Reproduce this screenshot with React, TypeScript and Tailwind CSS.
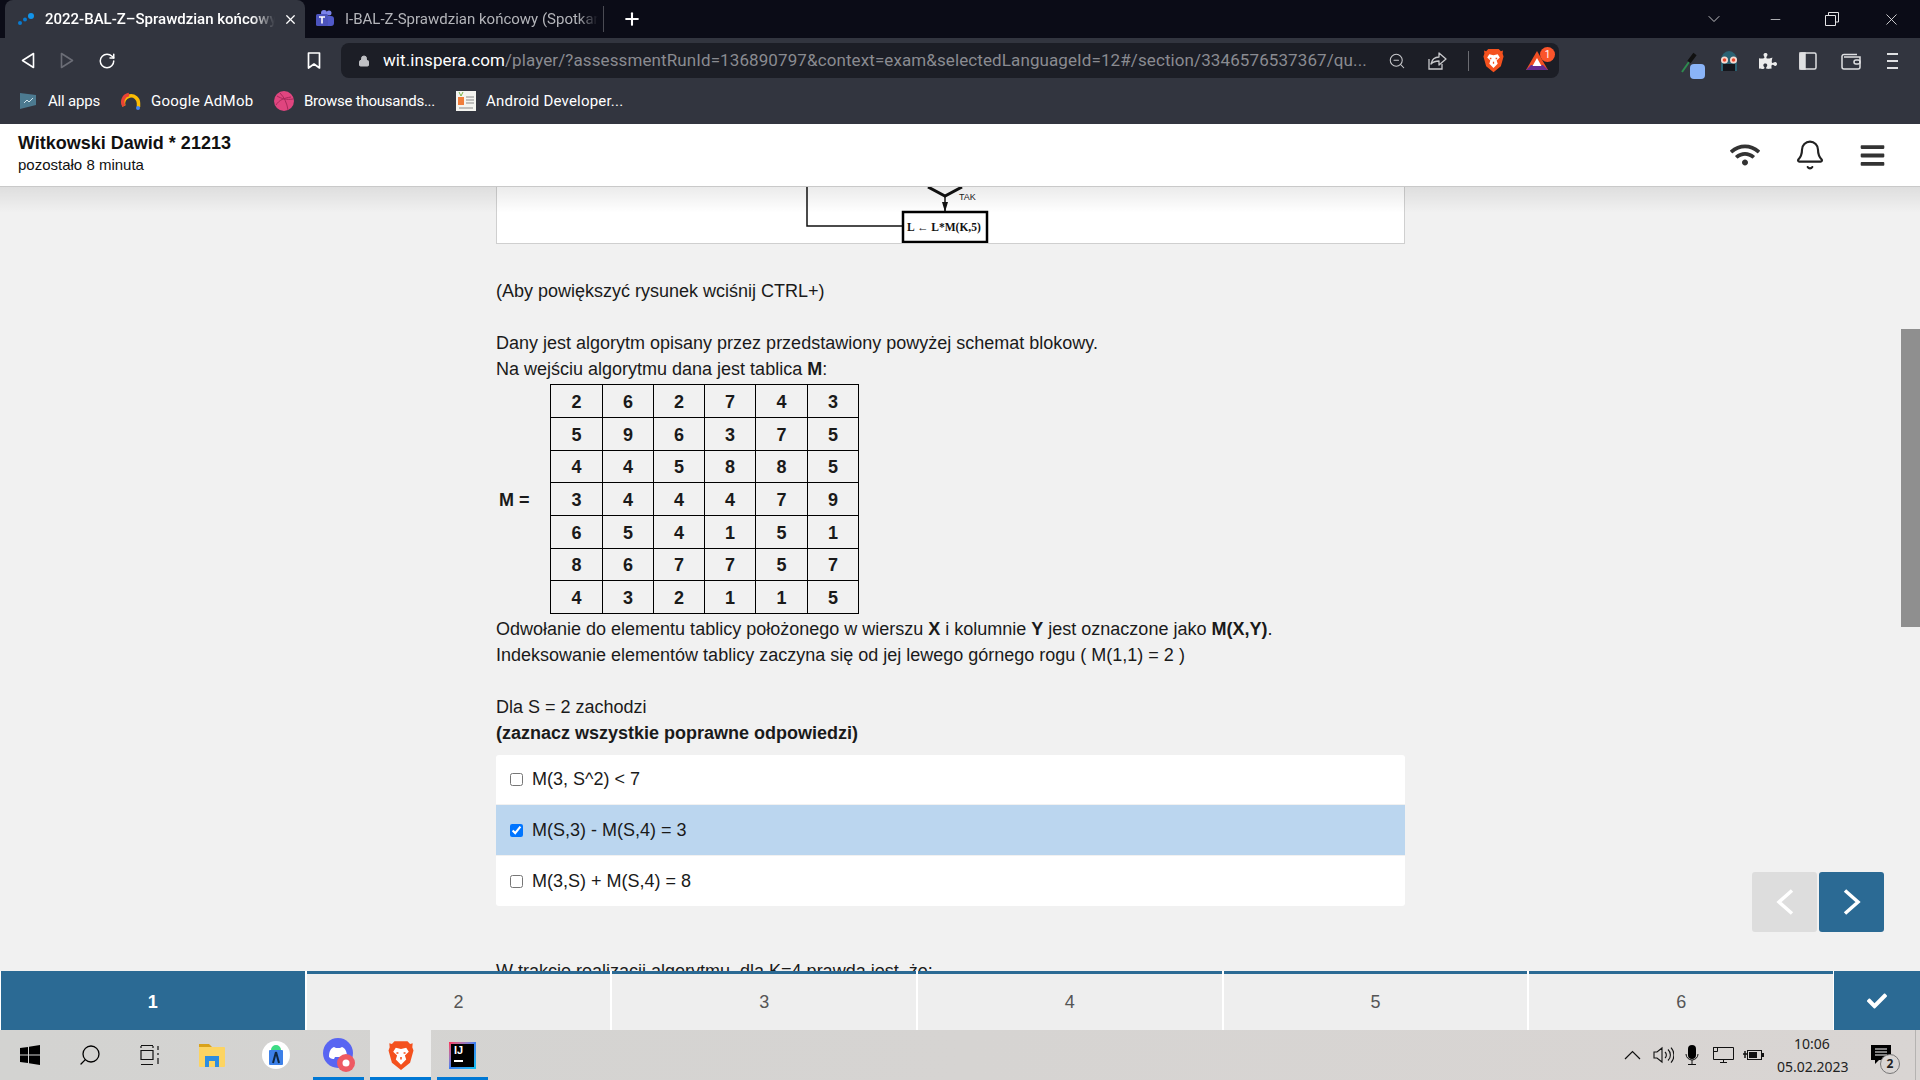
import { FaWifi, FaBars, FaCheck, FaPuzzlePiece } from "react-icons/fa";
import { Bell, ChevronDown, Lock, Minus, Plus, RotateCw, Search, X, ZoomOut } from "lucide-react";

const matrix = [
  { height: "h-[33px]", cells: [2, 6, 2, 7, 4, 3] },
  { height: "h-[33px]", cells: [5, 9, 6, 3, 7, 5] },
  { height: "h-[32px]", cells: [4, 4, 5, 8, 8, 5] },
  { height: "h-[33px]", cells: [3, 4, 4, 4, 7, 9] },
  { height: "h-[33px]", cells: [6, 5, 4, 1, 5, 1] },
  { height: "h-[32px]", cells: [8, 6, 7, 7, 5, 7] },
  { height: "h-[33px]", cells: [4, 3, 2, 1, 1, 5] },
];

const options = [
  { label: "M(3, S^2) < 7", checked: false, height: "h-[49px] pb-px" },
  { label: "M(S,3) - M(S,4) = 3", checked: true, height: "h-[50px]" },
  { label: "M(3,S) + M(S,4) = 8", checked: false, height: "h-[50px]" },
];

function BraveLogo({ size = 22 }: { size?: number }) {
  return (
    <svg width={size} height={size * 1.15} viewBox="0 0 20 23">
      <path d="M5 1h10l2 2 2-.5-.3 3 .9 2.5-2.6 9.5L10 23l-7-5.500L.4 8l.9-2.500L1 2.500 3 3z" fill="#f4511e" />
      <path d="M6 6l4 1 4-1 2 3-3 3 1 3-4 4-4-4 1-3-3-3z" fill="#fff" />
      <path d="M8 10l-1.500 0M13.500 10H12M10 13v2" stroke="#f4511e" strokeWidth="1.200" />
    </svg>
  );
}

function TopBar() {
  return (
    <div className="flex h-[38px] items-end bg-[#0b0c17] pl-[5px] text-[15px] font-['Roboto',sans-serif]">
      <div className="flex h-[38px] w-[300px] items-center rounded-t-lg bg-[#32353f] pl-[12px] text-white">
        <svg width="18" height="14" viewBox="0 0 18 14" className="shrink-0">
          <circle cx="3" cy="11" r="2" fill="#0a7bd1" />
          <circle cx="8" cy="7.500" r="2" fill="#0a7bd1" />
          <circle cx="14" cy="4" r="3" fill="#1294ea" />
        </svg>
        <span className="ml-[10px] w-[230px] overflow-hidden whitespace-nowrap font-medium [mask-image:linear-gradient(to_right,black_90%,transparent)]">
          2022-BAL-Z–Sprawdzian końcowy
        </span>
        <X size={15} className="ml-[8px] shrink-0" />
      </div>
      <div className="flex h-[38px] w-[298px] items-center pl-[10px] text-[#b4b5ba]">
        <svg width="20" height="20" viewBox="0 0 20 20" className="shrink-0">
          <circle cx="14" cy="4" r="2.500" fill="#7b83eb" />
          <rect x="9" y="7" width="10" height="10" rx="3" fill="#5059c9" />
          <circle cx="9" cy="4" r="3" fill="#7b83eb" />
          <rect x="1" y="5" width="12" height="12" rx="1.500" fill="#4b53bc" />
          <path d="M4 8h6M7 8v6.500" stroke="#fff" strokeWidth="1.600" />
        </svg>
        <span className="ml-[10px] w-[253px] overflow-hidden whitespace-nowrap [mask-image:linear-gradient(to_right,black_92%,transparent)]">
          I-BAL-Z-Sprawdzian końcowy (Spotkanie)
        </span>
      </div>
      <div className="mb-[6px] h-[26px] w-px bg-[#4a4b53]" />
      <Plus size={20} strokeWidth={2.500} className="mb-[9px] ml-[18px] text-white" />
      <div className="flex-1" />
      <div className="mb-[9px] flex items-center text-[#e4e4e6]">
        <ChevronDown size={20} strokeWidth={1} className="mr-[44px]" />
        <Minus size={15} strokeWidth={1.200} className="mr-[42px]" />
        <svg width="14" height="14" viewBox="0 0 14 14" className="mr-[43px]" fill="none" stroke="currentColor">
          <path d="M3.500 3V.500h10V10H11M.500 3.500h10v10H.500z" />
        </svg>
        <X size={19} strokeWidth={1.100} className="mr-[19px]" />
      </div>
    </div>
  );
}

function ToolBar() {
  return (
    <div className="flex h-[48px] items-start bg-[#32353f] text-[#dfe0e2]">
      <div className="flex h-[45px] items-center pl-[21px]">
        <svg width="14" height="17" viewBox="0 0 14 17" fill="none" stroke="#fff" strokeWidth="1.600">
          <path d="M12.500 1.500v14L1.500 8.500z" strokeLinejoin="round" />
        </svg>
        <svg width="14" height="17" viewBox="0 0 14 17" fill="none" stroke="#6b6d76" strokeWidth="1.600" className="ml-[25px]">
          <path d="M1.500 1.500v14l11-7z" strokeLinejoin="round" />
        </svg>
        <RotateCw size={18} strokeWidth={2} className="ml-[24px] text-white" />
      </div>
      <div className="flex h-[45px] items-center pl-[191px]">
        <svg width="14" height="17" viewBox="0 0 14 17" fill="none" stroke="#fff" strokeWidth="1.700">
          <path d="M1.500 1h11v15L7 12l-5.500 4z" strokeLinejoin="round" />
        </svg>
      </div>
      <div className="ml-[20px] mt-[5px] flex h-[35px] w-[1218px] items-center rounded-lg bg-[#1c1e26] pl-[17px] font-['Roboto',sans-serif] text-[17px] tracking-[0.1px]">
        <Lock size={12} fill="#bfc0c4" className="shrink-0 text-[#bfc0c4]" />
        <span className="ml-[13px] w-[984px] overflow-hidden whitespace-nowrap text-[#8a8b91]">
          <span className="text-white">wit.inspera.com</span>/player/?assessmentRunId=136890797&context=exam&selectedLanguageId=12#/section/3346576537367/qu...
        </span>
        <ZoomOut size={18} strokeWidth={1.400} className="ml-[21px] text-[#c8c9cc]" />
        <svg width="20" height="19" viewBox="0 0 20 19" fill="none" stroke="#c8c9cc" strokeWidth="1.300" className="ml-[21px]">
          <path d="M2 8v10h13v-5" />
          <path d="M4 13c1-5 4-7 8-7V2l7 6-7 6v-4c-3 0-6 1-8 3z" strokeLinejoin="round" />
        </svg>
        <div className="ml-[21px] h-[20px] w-px bg-[#6b6c72]" />
        <div className="ml-[14px] flex">
          <BraveLogo size={21} />
        </div>
        <div className="relative ml-[21px]">
          <svg width="24" height="21" viewBox="0 0 24 21">
            <path d="M12 1l11 19H1z" fill="#f04e23" />
            <path d="M1 20h22l-5-5H6z" fill="#662d91" />
            <path d="M12 8l4.500 8h-9z" fill="#fff" />
          </svg>
          <span className="absolute -right-[6px] -top-[3px] flex h-[15px] w-[15px] items-center justify-center rounded-full bg-[#fb542b] text-[10px] tracking-normal text-white">1</span>
        </div>
      </div>
      <div className="flex h-[45px] items-center">
        <div className="relative ml-[122px] h-[26px] w-[20px]">
          <svg width="18" height="22" viewBox="0 0 18 22" className="-ml-[1px] mt-[3px]">
            <path d="M2 21l7-10" stroke="#2e8b4f" strokeWidth="2" />
            <path d="M9 11l6-8" stroke="#111" strokeWidth="4" />
          </svg>
          <div className="absolute left-[9px] top-[16px] h-[15px] w-[15px] rounded-sm bg-[#8ab4f8]" />
        </div>
        <svg width="22" height="24" viewBox="0 0 22 24" className="ml-[17px]">
          <path d="M3 11a8 9 0 0116 0v11H3z" fill="#2a6273" />
          <rect x="5" y="15" width="12" height="7" fill="#14161c" />
          <circle cx="6.500" cy="11" r="3.500" fill="#f9d9cf" />
          <circle cx="15.500" cy="11" r="3.500" fill="#f9d9cf" />
          <circle cx="6.500" cy="11" r="1.800" fill="#e8492c" />
          <circle cx="15.500" cy="11" r="1.800" fill="#e8492c" />
        </svg>
        <FaPuzzlePiece size={18} className="ml-[19px] text-[#ececec]" />
        <svg width="18" height="18" viewBox="0 0 18 18" className="ml-[22px]" fill="none" stroke="#dfe0e2" strokeWidth="1.500">
          <rect x="1" y="1" width="16" height="16" rx="1.500" />
          <rect x="1" y="1" width="5" height="16" fill="#dfe0e2" />
        </svg>
        <svg width="20" height="19" viewBox="0 0 20 19" className="ml-[24px]" fill="none" stroke="#dfe0e2" strokeWidth="1.500">
          <path d="M3 3.500h13M1 5.500a2 2 0 012-2M1 5v11a2 2 0 002 2h14a2 2 0 002-2V6H3" />
          <rect x="13" y="9" width="6" height="4" rx="2" />
        </svg>
        <div className="ml-[26px] flex w-[11px] flex-col gap-[5px]">
          <div className="h-[2px] bg-[#dfe0e2]" />
          <div className="h-[2px] bg-[#dfe0e2]" />
          <div className="h-[2px] bg-[#dfe0e2]" />
        </div>
      </div>
    </div>
  );
}

function BookmarksBar() {
  return (
    <div className="flex h-[38px] items-start bg-[#32353f] pl-[20px] pt-[5px] font-['Roboto',sans-serif] text-[15px] text-white">
      <div className="flex h-[20px] items-center">
        <svg width="16" height="18" viewBox="0 0 16 18">
          <path d="M0 1l16 2v10L0 17z" fill="#4c7a90" />
          <path d="M4 11l3-3 2 2 4-4" stroke="#cfe3ec" strokeWidth="1" fill="none" />
        </svg>
        <span className="ml-[12px] w-[52px] whitespace-nowrap tracking-[-0.2px]">All apps</span>
        <svg width="20" height="20" viewBox="0 0 20 20" className="ml-[21px]">
          <path d="M3 15a7.500 7.500 0 1114.500-2.500V16" fill="none" stroke="#fbbc04" strokeWidth="3.500" />
          <path d="M3 15A7.500 7.500 0 018 3.500" fill="none" stroke="#ea4335" strokeWidth="3.500" />
          <circle cx="17" cy="17" r="2" fill="#4285f4" />
        </svg>
        <span className="ml-[10px] w-[102px] whitespace-nowrap tracking-[0.25px]">Google AdMob</span>
        <svg width="20" height="20" viewBox="0 0 20 20" className="ml-[21px]">
          <circle cx="10" cy="10" r="10" fill="#e0457f" />
          <path d="M3 5c5 3 10 4 16 3M6 2c4 4 7 10 8 17M2 14c3-5 8-7 15-8" stroke="#a8285a" strokeWidth="1" fill="none" />
        </svg>
        <span className="ml-[10px] w-[131px] whitespace-nowrap tracking-[-0.25px]">Browse thousands...</span>
        <svg width="20" height="20" viewBox="0 0 20 20" className="ml-[21px]">
          <rect width="20" height="20" fill="#f4f4f0" />
          <path d="M3 1l2 4M7 1L5 5" stroke="#7ab648" strokeWidth="1" />
          <rect x="2" y="6" width="6" height="8" fill="#ef7d3c" />
          <path d="M10 6h8M10 9h8M10 12h8M3 17h14" stroke="#8a8a8a" strokeWidth="1" />
        </svg>
        <span className="ml-[10px] whitespace-nowrap tracking-[0.2px]">Android Developer...</span>
      </div>
    </div>
  );
}

function ExamHeader() {
  return (
    <div className="flex h-[63px] items-center border-b border-[#c9c9c9] bg-white pl-[18px] pr-[34px] font-['Liberation_Sans',sans-serif] text-[#111]">
      <div className="-mt-[7px] flex-1">
        <div className="text-[18px] font-bold leading-[26px]">Witkowski Dawid * 21213</div>
        <div className="text-[15px] leading-[18px]">pozostało 8 minuta</div>
      </div>
      <FaWifi size={30} className="text-[#333]" />
      <Bell size={32} strokeWidth={1.600} className="ml-[34px] text-[#222]" />
      <FaBars size={27} className="ml-[33px] text-[#333]" />
    </div>
  );
}

function FlowchartCrop() {
  return (
    <div className="h-[57px] border-x border-b border-[#cfcfcf] bg-white">
      <svg width="907" height="56" viewBox="0 0 907 56">
        <path d="M310 0v39h96" fill="none" stroke="#111" strokeWidth="1.500" />
        <path d="M431 0l17 9 17-9" fill="none" stroke="#111" strokeWidth="3" />
        <path d="M448 8v17" stroke="#111" strokeWidth="1.500" />
        <path d="M445 15h6l-3 10z" fill="#111" />
        <text x="462" y="13" fontSize="9" fontFamily="Liberation Sans" fill="#222">TAK</text>
        <rect x="406" y="25" width="84" height="30" fill="#fff" stroke="#000" strokeWidth="2.500" />
        <text x="410" y="44" fontSize="11.500" fontWeight="700" fontFamily="Liberation Serif" fill="#111">L ← L*M(K,5)</text>
      </svg>
    </div>
  );
}

function MatrixTable() {
  return (
    <div className="flex items-center">
      <div className="w-[54px] pl-[3px] pt-px font-bold">M =</div>
      <table className="table-fixed border-collapse font-bold">
        <colgroup>
          <col className="w-[52px]" />
          <col className="w-[51px]" />
          <col className="w-[51px]" />
          <col className="w-[51px]" />
          <col className="w-[52px]" />
          <col className="w-[51px]" />
        </colgroup>
        <tbody>
          {matrix.map((row, r) => (
            <tr key={r} className={row.height}>
              {row.cells.map((value, c) => (
                <td key={c} className="border border-black p-0 pt-px text-center leading-none">{value}</td>
              ))}
            </tr>
          ))}
        </tbody>
      </table>
    </div>
  );
}

function Question() {
  return (
    <div className="ml-[496px] w-[909px] font-['Liberation_Sans',sans-serif] text-[18px] leading-[26px] text-[#1a1a1a]">
      <FlowchartCrop />
      <p className="mt-[34px]">(Aby powiększyć rysunek wciśnij CTRL+)</p>
      <p className="mt-[26px]">Dany jest algorytm opisany przez przedstawiony powyżej schemat blokowy.</p>
      <p className="mb-[2px]">Na wejściu algorytmu dana jest tablica <b>M</b>:</p>
      <MatrixTable />
      <p className="mt-[2px]">
        Odwołanie do elementu tablicy położonego w wierszu <b>X</b> i kolumnie <b>Y</b> jest oznaczone jako <b>M(X,Y)</b>.
      </p>
      <p>Indeksowanie elementów tablicy zaczyna się od jej lewego górnego rogu ( M(1,1) = 2 )</p>
      <p className="mt-[26px]">Dla S = 2 zachodzi</p>
      <p className="font-bold">(zaznacz wszystkie poprawne odpowiedzi)</p>
      <div className="mt-[9px] flex flex-col gap-px overflow-hidden rounded-[3px]">
        {options.map((option) => (
          <label
            key={option.label}
            className={`flex items-center pl-[14px] ${option.height} ${option.checked ? "bg-[#bbd6ef]" : "bg-white"}`}
          >
            <input type="checkbox" defaultChecked={option.checked} className="m-0 h-[13px] w-[13px]" />
            <span className="ml-[9px]">{option.label}</span>
          </label>
        ))}
      </div>
      <p className="mt-[52px]">W trakcie realizacji algorytmu, dla K=4 prawdą jest, że:</p>
    </div>
  );
}

function QuestionNav() {
  return (
    <div className="flex h-[59px] bg-white pl-px font-['Liberation_Sans',sans-serif] text-[18px]">
      <div className="grid flex-1 grid-cols-6 gap-[2px]">
        <div className="flex items-center justify-center bg-[#2b6a94] pt-[3px] font-bold text-white">1</div>
        {[2, 3, 4, 5, 6].map((n) => (
          <div key={n} className="flex items-center justify-center border-t-[3px] border-[#2b6a94] bg-[#eeeeee] text-[#555]">
            {n}
          </div>
        ))}
      </div>
      <div className="ml-px flex w-[86px] items-center justify-center bg-[#2b6a94] text-white">
        <FaCheck size={20} />
      </div>
    </div>
  );
}

function Taskbar() {
  return (
    <div className="flex h-[50px] items-center bg-gradient-to-r from-[#d3d3d1] to-[#d9d5d3] font-['Noto_Sans',sans-serif] text-[#222]">
      <div className="flex h-full">
        <div className="flex w-[60px] items-center justify-center">
          <svg width="20" height="20" viewBox="0 0 20 20" fill="#000">
            <path d="M0 3l8-1v7.500H0zM9 1.800L20 0v9.500H9zM0 10.500h8V18l-8-1zM9 10.500h11V20L9 18.200z" />
          </svg>
        </div>
        <div className="flex w-[60px] items-center justify-center">
          <Search size={24} strokeWidth={1.300} className="-scale-x-100 text-black" />
        </div>
        <div className="flex w-[59px] items-center justify-center">
          <svg width="20" height="20" viewBox="0 0 20 20" fill="none" stroke="#111" strokeWidth="1.200">
            <path d="M1 .500h12M1 19.500h12M1 5.500h12v9H1zM1 3V1M13 3V1M18 1v4M18 8v2M18 13v6" />
          </svg>
        </div>
        <div className="flex w-[66px] items-center justify-center">
          <svg width="28" height="24" viewBox="0 0 28 24">
            <path d="M1 1h10l3 3H1z" fill="#d9a21b" />
            <rect x="1" y="4" width="26" height="20" rx="1" fill="#fcd462" />
            <rect x="7" y="13" width="14" height="11" fill="#2e8de0" />
            <rect x="11" y="18" width="6" height="6" fill="#fcd462" />
          </svg>
        </div>
        <div className="flex w-[62px] items-center justify-center">
          <svg width="28" height="28" viewBox="0 0 28 28">
            <circle cx="14" cy="14" r="14" fill="#fff" />
            <rect x="7" y="9" width="14" height="15" rx="1" fill="#3d80e8" />
            <path d="M9 9a5 5 0 0110 0z" fill="#3ddc84" />
            <path d="M14 11l-3 11M14 11l3 11" stroke="#0f2740" strokeWidth="2" />
          </svg>
        </div>
        <div className="relative flex w-[63px] items-center justify-center">
          <svg width="32" height="34" viewBox="0 0 32 34">
            <circle cx="15" cy="15" r="15" fill="#5865f2" />
            <path d="M6 19c0-6 2-9 5-10l2 1h4l2-1c3 1 5 4 5 10-2 2-4 2-5 2l-1-2h-6l-1 2c-1 0-3 0-5-2z" fill="#fff" />
            <circle cx="23" cy="25" r="9" fill="#ee5a63" />
            <circle cx="23" cy="25" r="3.500" fill="#fff" />
          </svg>
          <div className="absolute bottom-0 left-[6px] right-[6px] h-[3px] bg-[#0078d4]" />
        </div>
        <div className="relative flex w-[61px] items-center justify-center bg-[#eeeeee]">
          <BraveLogo size={26} />
          <div className="absolute bottom-0 left-0 right-0 h-[3px] bg-[#0078d4]" />
        </div>
        <div className="relative ml-[6px] flex w-[51px] items-center justify-center">
          <div className="h-[27px] w-[27px] bg-gradient-to-br from-[#fe2857] via-[#3b7ff2] to-[#07c3f2] p-[2px]">
            <div className="h-full w-full bg-black pl-[3px] font-['Liberation_Sans',sans-serif] text-[11px] font-bold leading-[12px] text-white">
              IJ
              <div className="mt-[4px] h-[2px] w-[9px] bg-white" />
            </div>
          </div>
          <div className="absolute bottom-0 left-0 right-0 h-[3px] bg-[#0078d4]" />
        </div>
      </div>
      <div className="flex-1" />
      <div className="flex items-center">
        <svg width="17" height="10" viewBox="0 0 17 10" fill="none" stroke="#111" strokeWidth="1.200">
          <path d="M1 9l7.500-7.500L16 9" />
        </svg>
        <svg width="21" height="18" viewBox="0 0 21 18" fill="none" stroke="#111" strokeWidth="1.100" className="ml-[12px]">
          <path d="M1 6v6h3l5 4V2L4 6zM12 6a4 4 0 010 6M15 3.500a7.500 7.500 0 010 11M18 1.500a11 11 0 010 15" />
        </svg>
        <svg width="14" height="20" viewBox="0 0 14 20" className="ml-[11px]">
          <rect x="3" y="0" width="8" height="14" rx="4" fill="#000" />
          <path d="M1 9a6 6 0 0012 0M7 15v4M3 19.500h8" fill="none" stroke="#111" strokeWidth="1" />
        </svg>
        <svg width="21" height="16" viewBox="0 0 21 16" fill="none" stroke="#111" strokeWidth="1" className="ml-[14px]">
          <path d="M.500.500h20v12H.500zM10.500 12.500V15M7 15.500h7M.500 .500h4v4h-4z" />
        </svg>
        <svg width="21" height="12" viewBox="0 0 21 12" className="ml-[9px]">
          <rect x="4.500" y="1.500" width="14" height="9" fill="none" stroke="#111" />
          <rect x="6" y="3" width="8" height="6" fill="#111" />
          <rect x="19" y="4" width="2" height="4" fill="#111" />
          <path d="M0 5h4M2 2v7" stroke="#111" strokeWidth="1.500" />
        </svg>
      </div>
      <div className="ml-[13px] w-[70px] text-center text-[14px] leading-[23px]">
        <div>10:06</div>
        <div className="whitespace-nowrap">05.02.2023</div>
      </div>
      <div className="relative ml-[24px] mr-[14px] h-[50px] w-[30px]">
        <svg width="20" height="20" viewBox="0 0 20 20" className="mt-[15px]">
          <path d="M0 0h20v15H8l-4 4v-4H0z" fill="#000" />
          <path d="M4 4h12M4 7h12M4 10h12" stroke="#fff" strokeWidth="1" />
        </svg>
        <span className="absolute left-[9px] top-[24px] flex h-[20px] w-[20px] items-center justify-center rounded-full border border-[#777] bg-[#d9d5d3] text-[12px] font-bold">2</span>
      </div>
      <div className="h-[50px] w-px bg-[#b5b3b1]" />
      <div className="w-[4px]" />
    </div>
  );
}

export default function App() {
  return (
    <div className="flex h-[1080px] w-[1920px] flex-col overflow-hidden bg-[#f1f1f1]">
      <TopBar />
      <ToolBar />
      <BookmarksBar />
      <ExamHeader />
      <main className="relative flex-1 overflow-hidden bg-[#f1f1f1]">
        <Question />
        {/* shadow under the sticky header */}
        <div className="pointer-events-none absolute left-0 right-0 top-0 h-[26px] bg-gradient-to-b from-[#00000014] to-transparent" />
        <div className="absolute right-0 top-[142px] h-[298px] w-[19px] bg-[#8f8f8f]" />
        <div className="absolute right-[36px] top-[685px] flex gap-[2px]">
          <button className="flex h-[60px] w-[65px] items-center justify-center rounded-[3px] bg-[#dddddd]">
            <svg width="18" height="26" viewBox="0 0 18 26" fill="none" stroke="#fff" strokeWidth="3.500">
              <path d="M16 1.500L3 13l13 11.500" />
            </svg>
          </button>
          <button className="flex h-[60px] w-[65px] items-center justify-center rounded-[3px] bg-[#2b6a94]">
            <svg width="18" height="26" viewBox="0 0 18 26" fill="none" stroke="#fff" strokeWidth="3.500">
              <path d="M2 1.500L15 13 2 24.500" />
            </svg>
          </button>
        </div>
      </main>
      <QuestionNav />
      <Taskbar />
    </div>
  );
}
